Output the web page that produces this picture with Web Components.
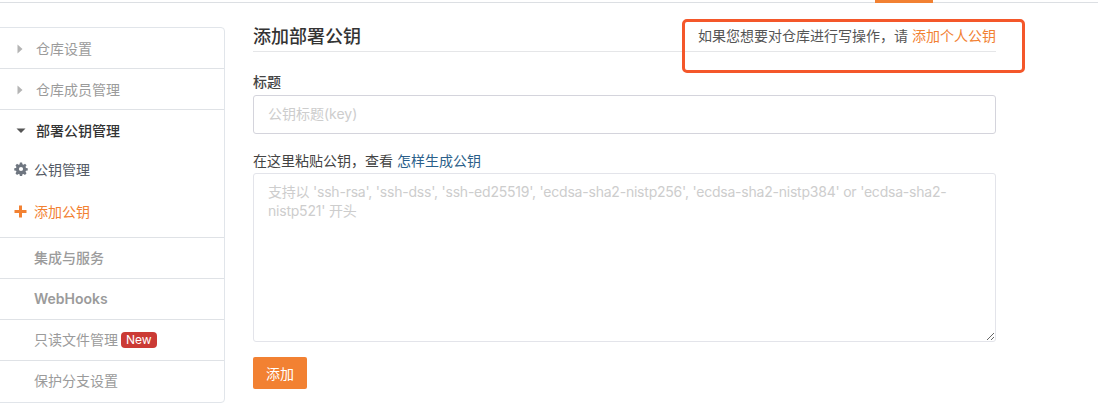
<!DOCTYPE html>
<html>
<head>
<meta charset="utf-8">
<title>添加部署公钥</title>
<style>
  html, body { margin: 0; padding: 0; background: #fff; }
  body {
    width: 1098px;
    height: 409px;
    overflow: hidden;
    font-family: "Inter", "Noto Sans CJK SC", sans-serif;
    font-size: 14px;
    color: #40485b;
  }
</style>
</head>
<body>
<top-tabs></top-tabs>
<settings-page>
  <side-menu slot="side">
    <menu-row arrow="right">仓库设置</menu-row>
    <menu-row arrow="right">仓库成员管理</menu-row>
    <menu-group>
      <menu-row arrow="down" slot="head" active>部署公钥管理</menu-row>
      <sub-row icon="gear">公钥管理</sub-row>
      <sub-row icon="plus" current>添加公钥</sub-row>
    </menu-group>
    <menu-row bold>集成与服务</menu-row>
    <menu-row bold latin>WebHooks</menu-row>
    <menu-row>只读文件管理<new-badge>New</new-badge></menu-row>
    <menu-row last>保护分支设置</menu-row>
  </side-menu>
  <deploy-key-form slot="main"></deploy-key-form>
</settings-page>
<note-frame></note-frame>

<script>
class TopTabs extends HTMLElement {
  constructor() {
    super();
    this.attachShadow({ mode: 'open' }).innerHTML = `
    <style>
      :host { display: block; height: 3px; box-sizing: border-box; border-bottom: 1px solid #dcdfe3; }
      .tab { width: 58px; height: 3px; margin-left: 875px; background: #f28132; }
    </style>
    <div class="tab"></div>`;
  }
}
customElements.define('top-tabs', TopTabs);

class SettingsPage extends HTMLElement {
  constructor() {
    super();
    this.attachShadow({ mode: 'open' }).innerHTML = `
    <style>
      :host { display: grid; grid-template-columns: 225px 743px; column-gap: 28px; padding-top: 24px; align-items: start; }
    </style>
    <slot name="side"></slot>
    <slot name="main"></slot>`;
  }
}
customElements.define('settings-page', SettingsPage);

class SideMenu extends HTMLElement {
  constructor() {
    super();
    this.attachShadow({ mode: 'open' }).innerHTML = `
    <style>
      :host { display: block; box-sizing: border-box; height: 376px; margin-left: -10px; border: 1px solid #e1e5ea; border-radius: 4px; background: #fff; }
    </style>
    <slot></slot>`;
  }
}
customElements.define('side-menu', SideMenu);

class MenuRow extends HTMLElement {
  constructor() {
    super();
    const arrow = this.getAttribute('arrow');
    let icon = '';
    if (arrow == 'right') icon = '<svg width="6" height="10" viewBox="0 0 6 10"><path d="M0.5 0.5 L5.5 5 L0.5 9.5 Z" fill="#b4b4b4"/></svg>';
    if (arrow == 'down') icon = '<svg width="10" height="6" viewBox="0 0 10 6"><path d="M0.5 0.5 L9.5 0.5 L5 5 Z" fill="#555"/></svg>';
    this.attachShadow({ mode: 'open' }).innerHTML = `
    <style>
      :host { display: flex; box-sizing: border-box; height: 41px; align-items: center; border-bottom: 1px solid #dfe2e6; color: #9b9b9b; font-size: 14px; padding-left: 43px; padding-bottom: 2px; position: relative; }
      :host([last]) { border-bottom: none; padding-bottom: 4px; }
      :host([bold]) { font-weight: 500; }
      :host([latin]) { font-weight: 600; padding-bottom: 2px; }
      :host([arrow]) { padding-left: 45px; padding-bottom: 0; }
      :host([active]) { color: #333; font-weight: 500; border-bottom: none; padding-bottom: 2px; }
      .arrow { position: absolute; left: 26px; top: 16px; line-height: 0; }
      :host([arrow="down"]) .arrow { left: 25px; top: 18px; }
    </style>
    <span class="arrow">${icon}</span><slot></slot>`;
  }
}
customElements.define('menu-row', MenuRow);

class MenuGroup extends HTMLElement {
  constructor() {
    super();
    this.attachShadow({ mode: 'open' }).innerHTML = `
    <style>
      :host { display: block; height: 128px; box-sizing: border-box; border-bottom: 1px solid #dfe2e6; }
    </style>
    <slot name="head"></slot>
    <slot></slot>`;
  }
}
customElements.define('menu-group', MenuGroup);

class SubRow extends HTMLElement {
  constructor() {
    super();
    const gear = '<svg width="14" height="14" viewBox="0 0 14 14"><path fill="#6f7680" fill-rule="evenodd" d="M5.9 0.6h2.2l.35 1.75 1.05.44 1.5-1 1.55 1.55-1 1.5.44 1.05 1.75.35v2.2l-1.75.35-.44 1.05 1 1.5-1.55 1.55-1.5-1-1.05.44-.35 1.75H5.9l-.35-1.75-1.05-.44-1.5 1-1.55-1.55 1-1.5-.44-1.05L.26 8.5V6.3l1.75-.35.44-1.05-1-1.5L3 1.85l1.5 1 1.05-.44zM7 4.9a2.1 2.1 0 1 0 0 4.2 2.1 2.1 0 0 0 0-4.2z"/></svg>';
    const plus = '<svg width="13" height="13" viewBox="0 0 13 13"><path fill="#f28132" d="M5 0.5h3v4.5h4.5v3H8v4.5H5V8H0.5V5H5z"/></svg>';
    const icon = this.getAttribute('icon') == 'gear' ? gear : plus;
    this.attachShadow({ mode: 'open' }).innerHTML = `
    <style>
      :host { display: flex; height: 35px; align-items: center; padding-left: 23px; color: #555b66; font-size: 14px; }
      :host([current]) { color: #f28132; height: 50px; }
      .icon { display: inline-flex; width: 20px; }
    </style>
    <span class="icon">${icon}</span><slot></slot>`;
  }
}
customElements.define('sub-row', SubRow);

class NewBadge extends HTMLElement {
  constructor() {
    super();
    this.attachShadow({ mode: 'open' }).innerHTML = `
    <style>
      :host { display: inline-block; margin: 2px 0 0 3px; padding: 0 5px; height: 16px; line-height: 16px; border-radius: 4px; background: #cb3a35; color: #fff; font-size: 12px; font-weight: normal; }
    </style>
    <slot></slot>`;
  }
}
customElements.define('new-badge', NewBadge);

class DeployKeyForm extends HTMLElement {
  constructor() {
    super();
    const hint = "支持以 'ssh-rsa', 'ssh-dss', 'ssh-ed25519', 'ecdsa-sha2-nistp256', 'ecdsa-sha2-nistp384' or 'ecdsa-sha2-nistp521' 开头";
    this.attachShadow({ mode: 'open' }).innerHTML = `
    <style>
      :host { display: block; color: #40485b; }
      .head { display: flex; justify-content: space-between; align-items: center; height: 24px; border-bottom: 1px solid #e5e6e8; }
      h3 { margin: 0; font-size: 18px; font-weight: 500; color: #333; line-height: 24px; position: relative; top: -2px; }
      .tip { font-size: 14px; color: #555; position: relative; top: -4px; }
      a { text-decoration: none; }
      .tip a { color: #f28132; }
      .label { display: block; font-size: 14px; line-height: 20px; color: #444; }
      .title-label { margin-top: 20px; font-weight: 500; }
      .key-label { margin-top: 17px; }
      .key-label a { color: #2b5f8a; }
      input, textarea {
        display: block; width: 100%; box-sizing: border-box; margin: 0;
        border: 1px solid #d4d4dc; border-radius: 3px; outline: none;
        font: 14px/19px "Inter", "Noto Sans CJK SC", sans-serif;
        padding: 0 14px; color: #333; background: #fff;
      }
      input { height: 39px; margin-top: 3px; padding-bottom: 2px; }
      textarea { height: 169px; margin-top: 2px; padding-top: 8px; padding-right: 14px; border-color: #e3e4ea; resize: vertical; letter-spacing: -0.22px; }
      ::placeholder { color: #cdcdcd; opacity: 1; }
      button {
        display: block; width: 54px; height: 32px; margin-top: 15px; padding: 0;
        border: none; border-radius: 2px; background: #f28132; color: #fff;
        font: 14px "Inter", "Noto Sans CJK SC", sans-serif;
      }
    </style>
    <div class="head">
      <h3>添加部署公钥</h3>
      <span class="tip">如果您想要对仓库进行写操作，请 <a href="#">添加个人公钥</a></span>
    </div>
    <label class="label title-label">标题</label>
    <input type="text" placeholder="公钥标题(key)">
    <label class="label key-label">在这里粘贴公钥，查看 <a href="#">怎样生成公钥</a></label>
    <textarea placeholder="${hint}"></textarea>
    <button>添加</button>`;
  }
}
customElements.define('deploy-key-form', DeployKeyForm);

// red box drawn over the screenshot, sits on top of the form
class NoteFrame extends HTMLElement {
  constructor() {
    super();
    this.attachShadow({ mode: 'open' }).innerHTML = `
    <style>
      :host { position: absolute; left: 682px; top: 19px; width: 343px; height: 54px; box-sizing: border-box; border: 3px solid #f4572a; border-radius: 5px; pointer-events: none; }
    </style>`;
  }
}
customElements.define('note-frame', NoteFrame);
</script>
</body>
</html>
